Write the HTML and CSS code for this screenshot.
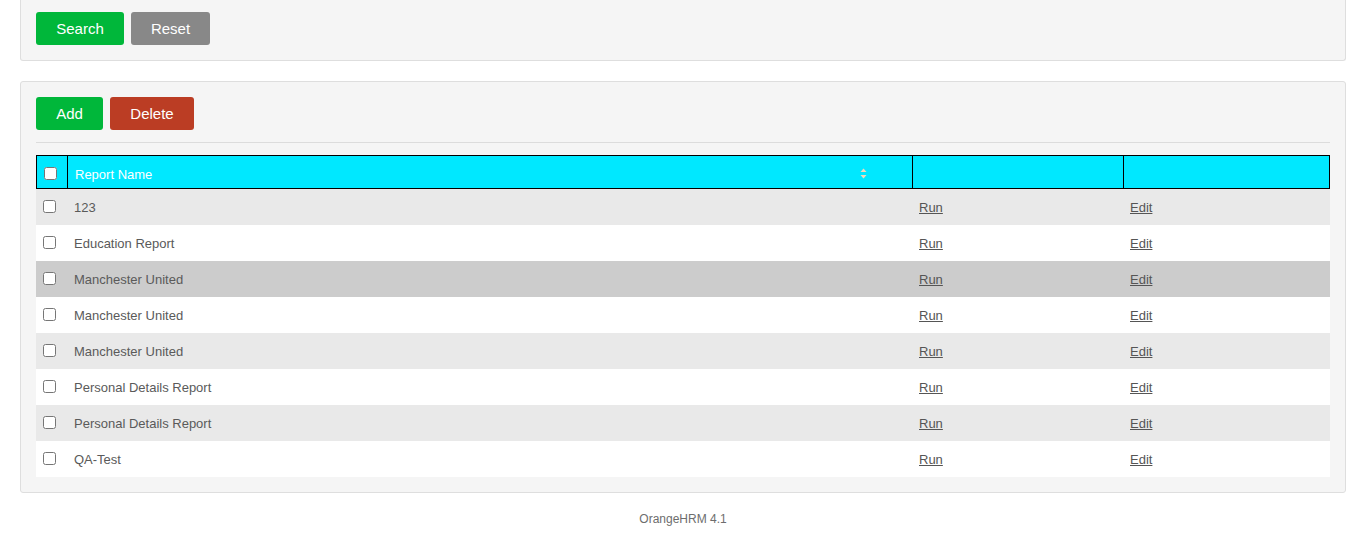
FILE: index.html
```html
<!DOCTYPE html>
<html>
<head>
<meta charset="utf-8">
<link rel="stylesheet" href="styles.css">
</head>
<body>
<div class="page">
  <div class="box box-top">
    <div class="actions">
      <button class="btn btn-green">Search</button>
      <button class="btn btn-grey">Reset</button>
    </div>
  </div>
  <div class="box box-list">
    <div class="actions">
      <button class="btn btn-green">Add</button>
      <button class="btn btn-red">Delete</button>
    </div>
    <div class="divider"></div>
    <table class="grid">
      <colgroup>
        <col class="c-check"><col class="c-name"><col class="c-run"><col class="c-edit">
      </colgroup>
      <thead>
        <tr>
          <th class="th-check"><input type="checkbox"></th>
          <th class="th-name"><span>Report Name</span>
            <svg class="sort" width="7" height="11" viewBox="0 0 7 11"><path d="M3.5 0.5 L6.5 4 L0.5 4 Z" fill="#f3d9bd"/><path d="M3.5 10.5 L6.5 7 L0.5 7 Z" fill="#f3d9bd"/></svg>
          </th>
          <th></th>
          <th class="th-last"></th>
        </tr>
      </thead>
      <tbody>
        <tr class="odd"><td class="td-check"><input type="checkbox"></td><td>123</td><td><a href="#">Run</a></td><td><a href="#">Edit</a></td></tr>
        <tr class="even"><td class="td-check"><input type="checkbox"></td><td>Education Report</td><td><a href="#">Run</a></td><td><a href="#">Edit</a></td></tr>
        <tr class="hover"><td class="td-check"><input type="checkbox"></td><td>Manchester United</td><td><a href="#">Run</a></td><td><a href="#">Edit</a></td></tr>
        <tr class="even"><td class="td-check"><input type="checkbox"></td><td>Manchester United</td><td><a href="#">Run</a></td><td><a href="#">Edit</a></td></tr>
        <tr class="odd"><td class="td-check"><input type="checkbox"></td><td>Manchester United</td><td><a href="#">Run</a></td><td><a href="#">Edit</a></td></tr>
        <tr class="even"><td class="td-check"><input type="checkbox"></td><td>Personal Details Report</td><td><a href="#">Run</a></td><td><a href="#">Edit</a></td></tr>
        <tr class="odd"><td class="td-check"><input type="checkbox"></td><td>Personal Details Report</td><td><a href="#">Run</a></td><td><a href="#">Edit</a></td></tr>
        <tr class="even"><td class="td-check"><input type="checkbox"></td><td>QA-Test</td><td><a href="#">Run</a></td><td><a href="#">Edit</a></td></tr>
      </tbody>
    </table>
  </div>
  <div class="footer">OrangeHRM 4.1</div>
</div>
</body>
</html>
```

FILE: styles.css
```css
* { box-sizing: border-box; }
html, body { margin: 0; padding: 0; background: #fff; }
body { font-family: "Liberation Sans", Arial, Helvetica, sans-serif; font-size: 13px; color: #5a5a5a; }
.page { padding: 0 20px; }
.box {
  background: #f5f5f5;
  border: 1px solid #dedede;
  border-radius: 3px;
  padding: 15px;
}
.box-top {
  border-top: 0;
  border-top-left-radius: 0;
  border-top-right-radius: 0;
  padding-top: 12px;
}
.box-list { margin-top: 20px; }
.actions { display: flex; gap: 7px; }
.btn {
  height: 33px;
  border: 0;
  border-radius: 3px;
  color: #fff;
  font-family: "Liberation Sans", Arial, Helvetica, sans-serif;
  font-size: 15px;
  padding: 0;
  cursor: pointer;
}
.btn-green { background: #00b73a; }
.btn-grey { background: #888888; }
.btn-red { background: #bb3d24; }
.box-top .btn-green { width: 88px; }
.box-top .btn-grey { width: 79px; }
.box-list .btn-green { width: 67px; }
.box-list .btn-red { width: 84px; }
.divider { height: 1px; background: #dcdcdc; margin: 12px 0 12px; }
.grid {
  width: 100%;
  border-collapse: separate;
  border-spacing: 0;
  table-layout: fixed;
}
.c-check { width: 31px; }
.c-name { width: 845px; }
.c-run { width: 211px; }
.grid thead th {
  background: #00e8ff;
  border-top: 1px solid #000;
  border-bottom: 1px solid #000;
  border-left: 1px solid #000;
  height: 34px;
  padding: 1px 0 0 7px;
  color: #fff;
  font-weight: normal;
  text-align: left;
  font-size: 13px;
  vertical-align: middle;
}
.grid thead th.th-name { padding-top: 5px; }
.grid thead th.th-last { border-right: 1px solid #000; }
.th-name { position: relative; }
.sort { position: absolute; right: 45px; top: 12px; }
input[type="checkbox"] {
  margin: 0;
  width: 13px;
  height: 13px;
  vertical-align: middle;
}
.grid tbody td {
  height: 36px;
  padding: 1px 0 0 7px;
  vertical-align: middle;
  white-space: nowrap;
}
.grid tbody td.td-check { padding: 0 0 3px 7px; }
.grid tbody tr.odd td { background: #e9e9e9; }
.grid tbody tr.even td { background: #ffffff; }
.grid tbody tr.hover td { background: #cccccc; }
.grid a { color: #555; text-decoration: underline; }
.footer {
  text-align: center;
  font-size: 12px;
  color: #6d6d6d;
  padding-top: 19px;
}
```
